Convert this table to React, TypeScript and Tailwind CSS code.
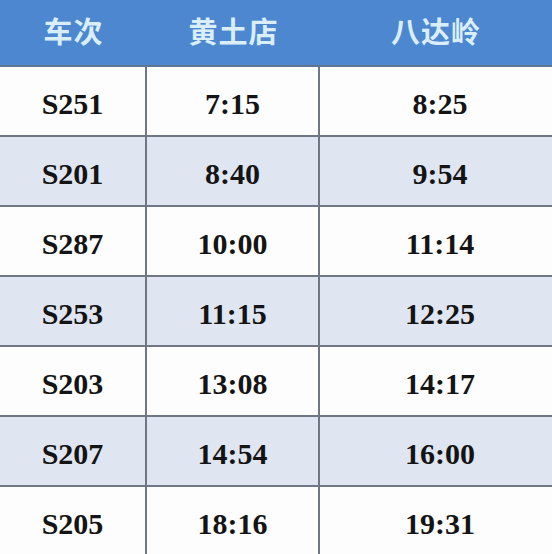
const rows = [
  ['S251', '7:15', '8:25'],
  ['S201', '8:40', '9:54'],
  ['S287', '10:00', '11:14'],
  ['S253', '11:15', '12:25'],
  ['S203', '13:08', '14:17'],
  ['S207', '14:54', '16:00'],
  ['S205', '18:16', '19:31'],
];

const headers = ['车次', '黄土店', '八达岭'];

export default function App() {
  return (
    <div className="h-[554px] w-[552px] overflow-hidden bg-white">
      <div className="grid h-[67px] grid-cols-[147px_173px_1fr] border-b-2 border-[#5f7592] bg-[#4c87cf]">
        {headers.map((h) => (
          <div
            key={h}
            className="flex items-center justify-center pb-1 text-[29px] font-bold tracking-[1px] text-[#d9eefa]"
            style={{ fontFamily: '"Noto Sans CJK SC", "Noto Sans", sans-serif' }}
          >
            {h}
          </div>
        ))}
      </div>
      {rows.map((r, i) => (
        <div
          key={r[0]}
          className={`grid h-[70px] grid-cols-[147px_173px_1fr] border-b-2 border-[#6f7785] ${
            i % 2 === 1 ? 'bg-[#dfe6f1]' : 'bg-[#fdfdfd]'
          }`}
        >
          {r.map((c, j) => (
            <div
              key={j}
              className={`flex items-center justify-center pt-1 text-[30px] font-bold text-[#141414] ${
                j < 2 ? 'border-r-2 border-[#6f7785]' : ''
              } ${j === 2 ? 'pl-2' : ''}`}
              style={{ fontFamily: '"Liberation Serif", "Times New Roman", serif' }}
            >
              {c}
            </div>
          ))}
        </div>
      ))}
    </div>
  );
}
